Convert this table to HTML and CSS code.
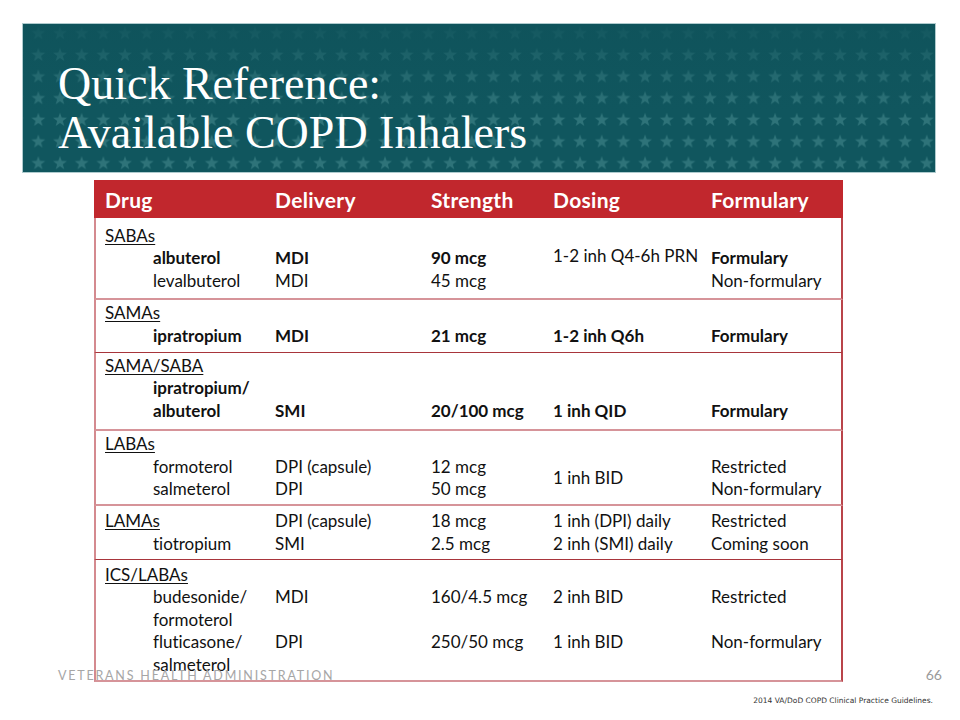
FILE: index.html
```html
<!DOCTYPE html>
<html>
<head>
<meta charset="utf-8">
<link rel="stylesheet" href="styles.css">
</head>
<body>
<div class="slide">
  <header class="banner">
    <svg class="stars" width="912" height="148" viewBox="0 0 912 148" aria-hidden="true">
      <defs>
        <pattern id="star" patternUnits="userSpaceOnUse" x="4.5" y="-1.5" width="21.67" height="21.67">
          <polygon points="10.83,3.63 12.53,8.48 17.68,8.61 13.59,11.73 15.06,16.65 10.83,13.73 6.60,16.65 8.07,11.73 3.98,8.61 9.13,8.48" fill="#2e7379"/>
        </pattern>
        <linearGradient id="fade" x1="0" y1="0" x2="0" y2="1">
          <stop offset="0" stop-color="#0f535b" stop-opacity="0.9"/>
          <stop offset="0.3" stop-color="#0f535b" stop-opacity="0.4"/>
          <stop offset="0.6" stop-color="#0f535b" stop-opacity="0"/>
          <stop offset="1" stop-color="#0f535b" stop-opacity="0"/>
        </linearGradient>
      </defs>
      <rect width="912" height="148" fill="#10565e"/>
      <rect width="912" height="148" fill="url(#star)"/>
      <rect width="912" height="148" fill="url(#fade)"/>
    </svg>
    <h1 class="title">Quick Reference:<br>Available COPD Inhalers</h1>
  </header>

  <div class="tbl">
    <div class="thead">
      <div class="th">Drug</div>
      <div class="th">Delivery</div>
      <div class="th">Strength</div>
      <div class="th">Dosing</div>
      <div class="th">Formulary</div>
    </div>

    <div class="grp g1 line-pink">
      <div class="c1 r1"><span class="cls">SABAs</span></div>
      <div class="c1 r2 drug b">albuterol</div>
      <div class="c1 r3 drug">levalbuterol</div>
      <div class="c2 r2 b">MDI</div>
      <div class="c2 r3">MDI</div>
      <div class="c3 r2 b">90 mcg</div>
      <div class="c3 r3">45 mcg</div>
      <div class="c4 r2 up">1-2 inh Q4-6h PRN</div>
      <div class="c5 r2 b">Formulary</div>
      <div class="c5 r3">Non-formulary</div>
    </div>

    <div class="grp g2 line-dark">
      <div class="c1 r1"><span class="cls">SAMAs</span></div>
      <div class="c1 r2 drug b">ipratropium</div>
      <div class="c2 r2 b">MDI</div>
      <div class="c3 r2 b">21 mcg</div>
      <div class="c4 r2 b">1-2 inh Q6h</div>
      <div class="c5 r2 b">Formulary</div>
    </div>

    <div class="grp g3 line-pink">
      <div class="c1 r1"><span class="cls">SAMA/SABA</span></div>
      <div class="c1 r2 drug b">ipratropium/</div>
      <div class="c1 r3 drug b">albuterol</div>
      <div class="c2 r3 b">SMI</div>
      <div class="c3 r3 b">20/100 mcg</div>
      <div class="c4 r3 b">1 inh QID</div>
      <div class="c5 r3 b">Formulary</div>
    </div>

    <div class="grp g4 line-pink">
      <div class="c1 r1"><span class="cls">LABAs</span></div>
      <div class="c1 r2 drug">formoterol</div>
      <div class="c1 r3 drug">salmeterol</div>
      <div class="c2 r2">DPI (capsule)</div>
      <div class="c2 r3">DPI</div>
      <div class="c3 r2">12 mcg</div>
      <div class="c3 r3">50 mcg</div>
      <div class="c4 r23 mid">1 inh BID</div>
      <div class="c5 r2">Restricted</div>
      <div class="c5 r3">Non-formulary</div>
    </div>

    <div class="grp g5 line-dark">
      <div class="c1 r1"><span class="cls">LAMAs</span></div>
      <div class="c1 r2 drug">tiotropium</div>
      <div class="c2 r1">DPI (capsule)</div>
      <div class="c2 r2">SMI</div>
      <div class="c3 r1">18 mcg</div>
      <div class="c3 r2">2.5 mcg</div>
      <div class="c4 r1">1 inh (DPI) daily</div>
      <div class="c4 r2">2 inh (SMI) daily</div>
      <div class="c5 r1">Restricted</div>
      <div class="c5 r2">Coming soon</div>
    </div>

    <div class="grp g6 line-pink">
      <div class="c1 r1"><span class="cls">ICS/LABAs</span></div>
      <div class="c1 r2 drug">budesonide/</div>
      <div class="c1 r3 drug">formoterol</div>
      <div class="c1 r4 drug">fluticasone/</div>
      <div class="c1 r5 drug">salmeterol</div>
      <div class="c2 r2">MDI</div>
      <div class="c2 r4">DPI</div>
      <div class="c3 r2">160/4.5 mcg</div>
      <div class="c3 r4">250/50 mcg</div>
      <div class="c4 r2">2 inh BID</div>
      <div class="c4 r4">1 inh BID</div>
      <div class="c5 r2">Restricted</div>
      <div class="c5 r4">Non-formulary</div>
    </div>
  </div>

  <div class="foot-org">VETERANS HEALTH ADMINISTRATION</div>
  <div class="foot-page">66</div>
  <div class="foot-cite">2014 VA/DoD COPD Clinical Practice Guidelines.</div>
</div>
</body>
</html>
```

FILE: styles.css
```css
html, body {
  margin: 0;
  padding: 0;
  background: #ffffff;
}

.slide {
  position: relative;
  width: 960px;
  height: 720px;
  overflow: hidden;
  background: #ffffff;
  font-family: "Lato", "Liberation Sans", sans-serif;
  font-variant-ligatures: none;
  color: #111111;
  padding-top: 24px;
  box-sizing: border-box;
}

/* ---------- banner ---------- */
.banner {
  position: relative;
  margin-left: 23px;
  width: 912px;
  height: 148px;
  box-shadow: 0 0 0 1px rgba(110, 160, 165, 0.55);
}

.stars {
  position: absolute;
  left: 0;
  top: 0;
  display: block;
}

.title {
  position: relative;
  margin: 0;
  padding: 35px 0 0 35px;
  font-family: "Liberation Serif", "Times New Roman", serif;
  font-weight: normal;
  font-size: 46px;
  line-height: 49px;
  color: #ffffff;
}

/* ---------- table ---------- */
.tbl {
  margin: 8px 0 0 94px;
  width: 749px;
}

.thead {
  display: grid;
  grid-template-columns: 171px 156px 122px 158px 1fr;
  height: 38px;
  align-items: center;
  background: #c1272d;
  color: #ffffff;
}

.th {
  padding-left: 10px;
  font-weight: 700;
  font-size: 21px;
  letter-spacing: 0.3px;
}

.th:first-child {
  padding-left: 11px;
}

.grp {
  display: grid;
  grid-template-columns: 169px 156px 122px 158px 1fr;
  grid-auto-rows: 22.4px;
  border-left: 2px solid #d48a8f;
  border-right: 2px solid #b9444a;
  padding: 4px 0 4px;
  font-size: 17px;
  line-height: 22.4px;
  white-space: nowrap;
}

.grp.g1 { padding: 7px 0 6px; }
.grp.g2 { padding: 2px 0 5px; }
.grp.g3 { padding: 2px 0 7px; }
.grp.g4 { padding: 2px 0 4px; }
.grp.g5 { padding: 4px 0 4px; }
.grp.g6 { padding: 4px 0 4px; }

.line-pink {
  border-bottom: 2px solid #d69499;
}

.line-dark {
  border-bottom: 1px solid #a8353b;
}

.grp > div {
  padding-left: 10px;
}

.grp > .c1 {
  padding-left: 9px;
}

.grp > .c1.drug {
  padding-left: 57px;
}

.c1 { grid-column: 1; }
.c2 { grid-column: 2; }
.c3 { grid-column: 3; }
.c4 { grid-column: 4; }
.c5 { grid-column: 5; }

.r1 { grid-row: 1; }
.r2 { grid-row: 2; }
.r3 { grid-row: 3; }
.r4 { grid-row: 4; }
.r5 { grid-row: 5; }
.r23 { grid-row: 2 / span 2; }

.mid {
  align-self: center;
}

.up {
  position: relative;
  top: -2px;
}

.b {
  font-weight: 700;
}

.cls {
  text-decoration: underline;
  text-underline-offset: 2px;
  text-decoration-thickness: 1px;
}

/* ---------- footer ---------- */
.foot-org {
  position: absolute;
  left: 58px;
  top: 668px;
  font-size: 12.5px;
  letter-spacing: 1.8px;
  color: #a6a6a6;
}

.foot-page {
  position: absolute;
  right: 18px;
  top: 666px;
  font-size: 14px;
  color: #9a9a9a;
}

.foot-cite {
  position: absolute;
  right: 27px;
  top: 696px;
  font-family: "DejaVu Sans", sans-serif;
  font-size: 7.5px;
  color: #333333;
}
```
